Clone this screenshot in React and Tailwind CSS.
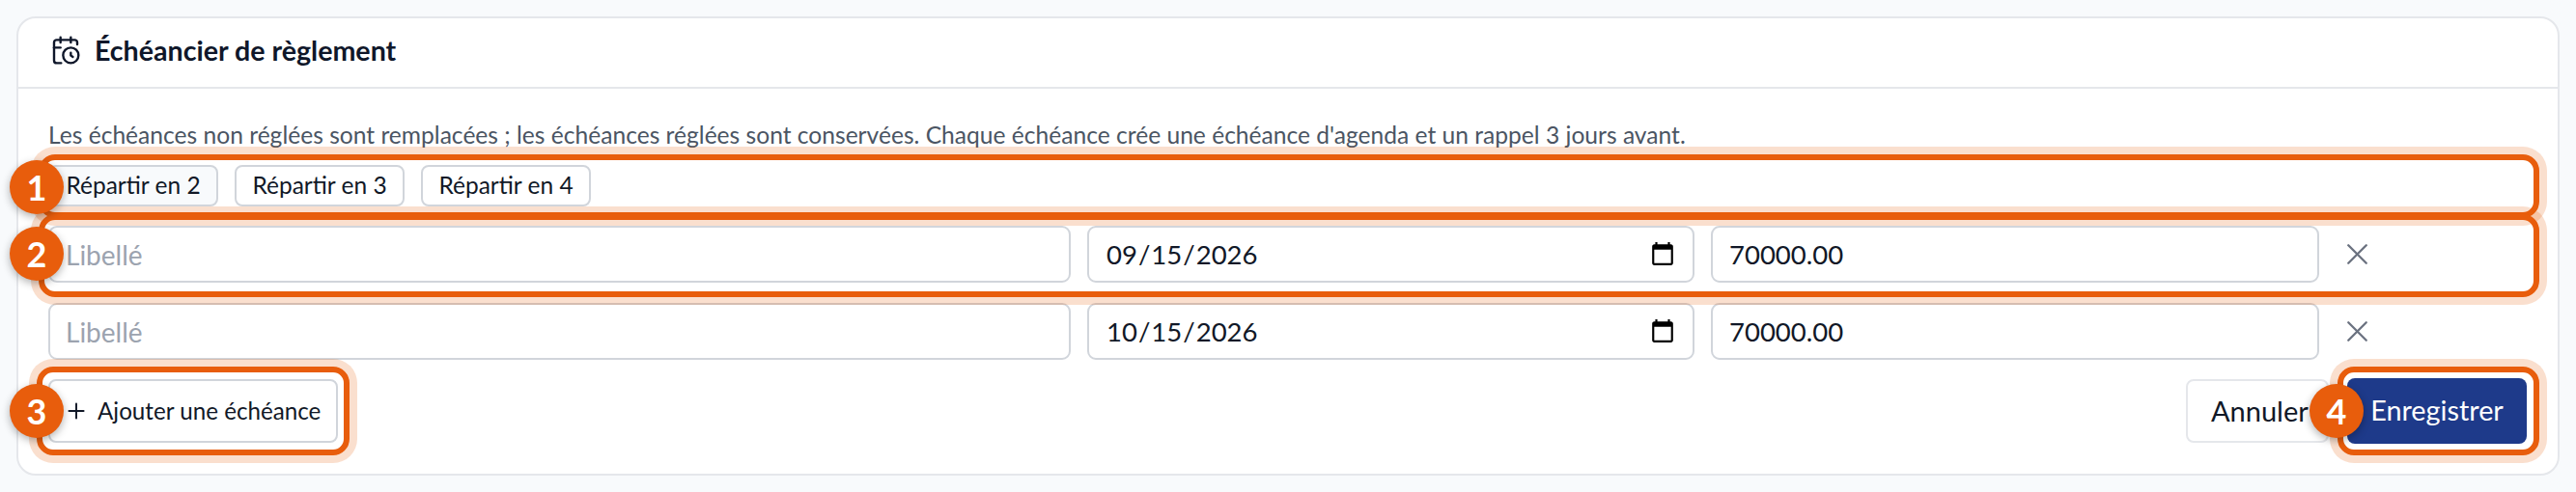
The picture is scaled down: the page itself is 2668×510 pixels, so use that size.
import React from "react";
import { CalendarClock, Plus, X } from "lucide-react";

const rows = ["2026-09-15", "2026-10-15"];

function Row({ date }) {
  return (
    <div className="flex items-center gap-[17px]">
      <input
        placeholder="Libellé"
        className="w-[1059px] h-[59px] rounded-[9px] border-2 border-[#d1d5db] bg-white px-[16px] text-[28px] text-[#111827] placeholder:text-[#9ca3af] outline-none"
      />
      <input
        type="date"
        defaultValue={date}
        className="w-[629px] h-[59px] rounded-[9px] border-2 border-[#d1d5db] bg-white px-[17px] text-[27.5px] text-[#111827] outline-none [&::-webkit-calendar-picker-indicator]:w-[28px] [&::-webkit-calendar-picker-indicator]:h-[28px] [&::-webkit-calendar-picker-indicator]:m-0 [&::-webkit-calendar-picker-indicator]:p-0"
      />
      <input
        defaultValue="70000.00"
        className="w-[630px] h-[59px] rounded-[9px] border-2 border-[#d1d5db] bg-white px-[17px] text-[27.5px] text-[#111827] outline-none"
      />
      <button className="w-[44px] flex items-center justify-center text-[#6b7280]">
        <X size={37} strokeWidth={1.5} />
      </button>
    </div>
  );
}

function Badge({ className, children }) {
  return (
    <div
      className={`absolute w-[56px] h-[56px] rounded-full bg-[#e85d0c] text-white text-[36px] font-bold flex items-center justify-center shadow-[0_3px_8px_rgba(0,0,0,0.3)] ${className}`}
    >
      {children}
    </div>
  );
}

function Frame({ className }) {
  return (
    <div
      className={`absolute rounded-[17px] border-[6px] border-[#e85d0c] shadow-[0_0_0_8px_rgba(232,93,12,0.2)] ${className}`}
    />
  );
}

export default function App() {
  return (
    <div className="relative w-[2668px] h-[510px] overflow-hidden bg-[#f8fafc] p-[17px] font-['Lato','Noto_Sans',sans-serif]">
      <div className="w-[2634px] h-[476px] rounded-[20px] border-2 border-[#e5e7eb] bg-white">
        {/* Header */}
        <div className="flex items-center gap-[14px] h-[73px] pb-[5px] px-[33px] border-b-2 border-[#e5e7eb]">
          <CalendarClock size={32} strokeWidth={1.8} className="text-[#0f172a]" />
          <h2 className="text-[28.6px] font-bold text-[#0f172a]">
            Échéancier de règlement
          </h2>
        </div>

        {/* Body */}
        <div className="pl-[31px] pr-[32px] pt-[32px]">
          <p className="h-[32px] leading-[32px] text-[24.6px] text-[#4b5563]">
            Les échéances non réglées sont remplacées ; les échéances réglées
            sont conservées. Chaque échéance crée une échéance d'agenda et un
            rappel 3 jours avant.
          </p>

          <div className="flex gap-[17px] mt-[15px]">
            {[2, 3, 4].map((n) => (
              <button
                key={n}
                className={`w-[176px] h-[43px] rounded-[8px] border-2 border-[#d1d5db] text-[24.5px] text-[#111827] ${
                  n === 2 ? "bg-[#f8fafc]" : "bg-white"
                }`}
              >
                Répartir en {n}
              </button>
            ))}
          </div>

          <div className="flex flex-col gap-[21px] mt-[20px]">
            {rows.map((d) => (
              <Row key={d} date={d} />
            ))}
          </div>

          <div className="flex items-center justify-between mt-[19px]">
            <button className="flex items-center gap-[9px] w-[300px] h-[66px] pl-[14px] rounded-[8px] border-2 border-[#d1d5db] bg-white text-[24.2px] text-[#111827]">
              <Plus size={26} strokeWidth={1.8} />
              Ajouter une échéance
            </button>
            <div className="flex items-center gap-[19px]">
              <button className="w-[148px] h-[66px] rounded-[8px] border-2 border-[#e5e7eb] bg-white text-[29px] text-[#111827] text-left pl-[24px]">
                Annuler
              </button>
              <button className="w-[186px] h-[68px] rounded-[8px] bg-[#1e3a8a] text-[28.8px] text-white">
                Enregistrer
              </button>
            </div>
          </div>
        </div>
      </div>

      {/* Annotations */}
      <Frame className="left-[40px] top-[160px] w-[2590px] h-[66px]" />
      <Frame className="left-[40px] top-[222px] w-[2590px] h-[86px]" />
      <Frame className="left-[38px] top-[380px] w-[324px] h-[92px]" />
      <Frame className="left-[2421px] top-[380px] w-[209px] h-[92px]" />
      <Badge className="left-[10px] top-[166px]">1</Badge>
      <Badge className="left-[10px] top-[235px]">2</Badge>
      <Badge className="left-[10px] top-[398px]">3</Badge>
      <Badge className="left-[2392px] top-[398px]">4</Badge>
    </div>
  );
}
